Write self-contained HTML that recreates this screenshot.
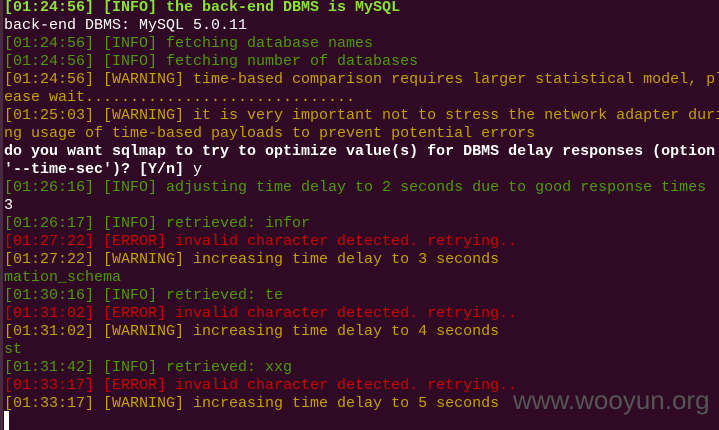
<!DOCTYPE html>
<html><head><meta charset="utf-8"><style>
html,body{margin:0;padding:0;}
body{width:719px;height:430px;background:#300a24;overflow:hidden;position:relative;}
pre{margin:0;position:absolute;left:4px;top:-1px;font-family:"Liberation Mono","DejaVu Sans Mono",monospace;font-size:15px;line-height:18px;color:#fff;white-space:pre;}
.g{color:#4e9a06}.G{color:#8ae234;font-weight:bold}.y{color:#c4a000}.r{color:#cc0000}.b{font-weight:bold}
.edge{position:absolute;left:0;top:0;width:3px;height:430px;background:#4a2a40;}
.cur{position:absolute;left:4px;top:411px;width:5px;height:19px;background:#fff;}
.wm{position:absolute;left:513px;top:385px;font-family:"Liberation Sans",sans-serif;font-size:26px;color:#555;}
</style></head><body>
<div class="edge"></div>
<pre><span class="G">[01:24:56] [INFO] the back-end DBMS is MySQL</span>
back-end DBMS: MySQL 5.0.11
<span class="g">[01:24:56] [INFO] fetching database names</span>
<span class="g">[01:24:56] [INFO] fetching number of databases</span>
<span class="y">[01:24:56] [WARNING] time-based comparison requires larger statistical model, pl</span>
<span class="y">ease wait..............................</span>
<span class="y">[01:25:03] [WARNING] it is very important not to stress the network adapter duri</span>
<span class="y">ng usage of time-based payloads to prevent potential errors</span>
<span class="b">do you want sqlmap to try to optimize value(s) for DBMS delay responses (option</span>
<span class="b">'--time-sec')? [Y/n]</span> y
<span class="g">[01:26:16] [INFO] adjusting time delay to 2 seconds due to good response times</span>
3
<span class="g">[01:26:17] [INFO] retrieved: infor</span>
<span class="r">[01:27:22] [ERROR] invalid character detected. retrying..</span>
<span class="y">[01:27:22] [WARNING] increasing time delay to 3 seconds</span>
<span class="g">mation_schema</span>
<span class="g">[01:30:16] [INFO] retrieved: te</span>
<span class="r">[01:31:02] [ERROR] invalid character detected. retrying..</span>
<span class="y">[01:31:02] [WARNING] increasing time delay to 4 seconds</span>
<span class="g">st</span>
<span class="g">[01:31:42] [INFO] retrieved: xxg</span>
<span class="r">[01:33:17] [ERROR] invalid character detected. retrying..</span>
<span class="y">[01:33:17] [WARNING] increasing time delay to 5 seconds</span>
</pre>
<div class="cur"></div>
<div class="wm">www.wooyun.org</div>
</body></html>
